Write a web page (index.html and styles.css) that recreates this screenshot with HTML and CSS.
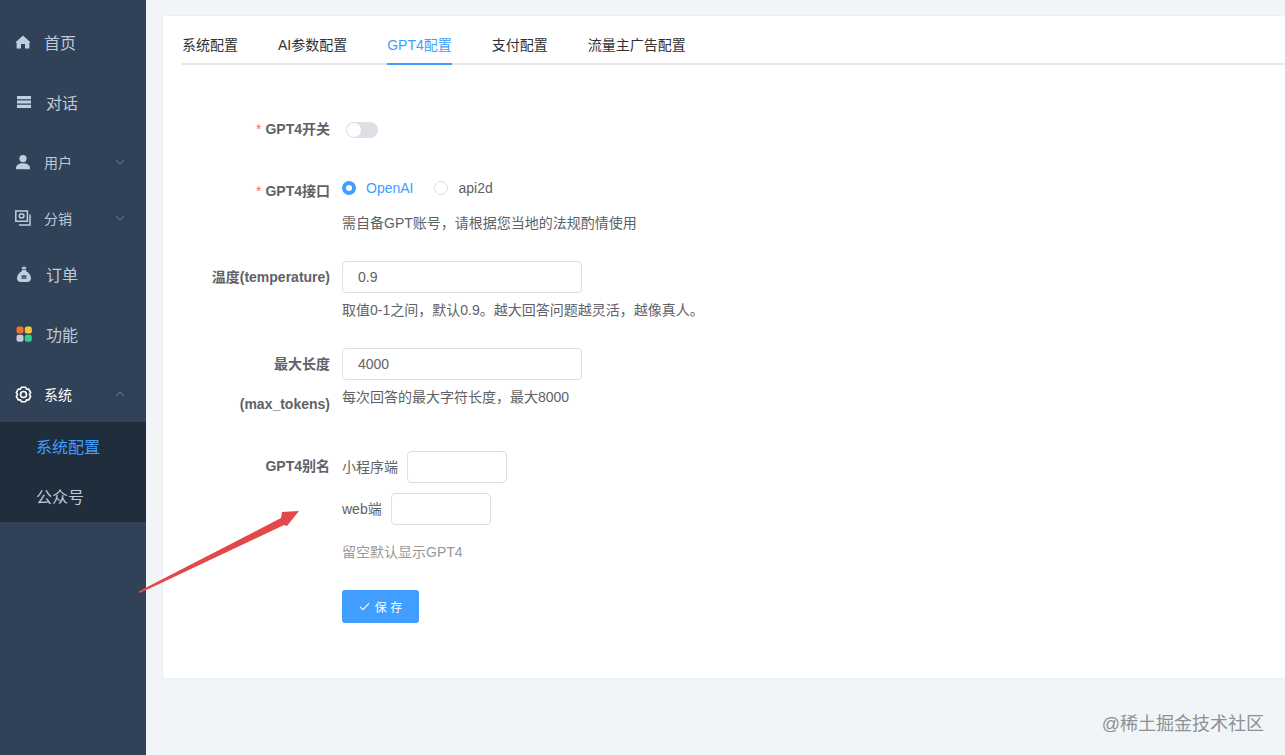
FILE: index.html
```html
<!DOCTYPE html>
<html lang="en">
<head>
    <meta charset="UTF-8">
    <meta name="viewport" content="width=device-width, initial-scale=1.0">
    <title>系统配置</title>
    <link rel="stylesheet" href="styles.css">
</head>
<body>
    <aside class="sidebar">
        <a class="menu-item large">
            <svg class="menu-icon" viewBox="0 0 16 16"><path d="M8 1.5 0.6 8.2 1.6 8.9V14.500H6V10H10V14.500H14.400V8.900L15.400 8.200Z"/></svg>
            <span>首页</span>
        </a>
        <a class="menu-item large shifted">
            <svg class="menu-icon" viewBox="0 0 16 16"><path d="M1 2H15V5.200H1ZM1 6.400H15V9.600H1ZM1 10.800H15V14H1Z"/></svg>
            <span>对话</span>
        </a>
        <a class="menu-item small">
            <svg class="menu-icon" viewBox="0 0 16 16"><circle cx="8" cy="4.600" r="3.600"/><path d="M1 14.400C1 10.800 4 9.200 8 9.200S15 10.800 15 14.400C15 15 14.600 15.300 14 15.300H2C1.400 15.300 1 15 1 14.400Z"/></svg>
            <span>用户</span>
            <svg class="chevron" viewBox="0 0 10 6"><path d="M1 1 5 5 9 1"/></svg>
        </a>
        <a class="menu-item small">
            <svg class="menu-icon outline" viewBox="0 0 16 16"><path d="M0.800 1H12.400V11.200H0.800Z"/><path d="M15 4.500V15H4"/><rect x="4.300" y="3.900" width="4.600" height="3.800" rx="1.800"/></svg>
            <span>分销</span>
            <svg class="chevron" viewBox="0 0 10 6"><path d="M1 1 5 5 9 1"/></svg>
        </a>
        <a class="menu-item large shifted">
            <svg class="menu-icon" viewBox="0 0 16 16">
                <path d="M8 0 9 1.500 10.500 1 10 3H6L5.500 1 7 1.500Z"/>
                <path d="M5.800 3.800H10.200V5.200C12.800 6.800 15 9.200 15 12.200 15 14.600 13.400 16 11 16H5C2.600 16 1 14.600 1 12.200 1 9.200 3.200 6.800 5.800 5.200Z"/>
                <rect class="bag-mark" x="5.500" y="9" width="5" height="4" rx="0.800"/>
            </svg>
            <span>订单</span>
        </a>
        <a class="menu-item large shifted">
            <svg class="menu-icon" viewBox="0 0 16 16">
                <rect x="0.500" y="0.500" width="7" height="7" rx="2" fill="#f0702c"/>
                <rect x="8.800" y="0.500" width="7" height="7" rx="2" fill="#f5c531"/>
                <rect x="0.500" y="8.800" width="7" height="7" rx="2" fill="#c4ccd8"/>
                <rect x="8.800" y="8.800" width="7" height="7" rx="2" fill="#2fcf8a"/>
            </svg>
            <span>功能</span>
        </a>
        <a class="menu-item small open">
            <svg class="menu-icon outline gear" viewBox="0 0 16 16"><path d="M6 1.200H10L10.800 3 12.800 2.800 14.800 6.200 13.600 8 14.800 9.800 12.800 13.200 10.800 13 10 14.800H6L5.200 13 3.200 13.200 1.200 9.800 2.400 8 1.200 6.200 3.200 2.800 5.200 3Z"/><circle cx="8" cy="8" r="2.800"/></svg>
            <span>系统</span>
            <svg class="chevron" viewBox="0 0 10 6"><path d="M1 5 5 1 9 5"/></svg>
        </a>
        <div class="submenu">
            <a class="submenu-item active">系统配置</a>
            <a class="submenu-item">公众号</a>
        </div>
    </aside>

    <main class="main">
        <div class="card">
            <div class="tabs">
                <div class="tab">系统配置</div>
                <div class="tab">AI参数配置</div>
                <div class="tab active">GPT4配置</div>
                <div class="tab">支付配置</div>
                <div class="tab">流量主广告配置</div>
            </div>

            <form class="form">
                <div class="form-item">
                    <label class="form-label required">GPT4开关</label>
                    <div class="form-content">
                        <span class="switch"><span class="switch-knob"></span></span>
                    </div>
                </div>

                <div class="form-item">
                    <label class="form-label low required">GPT4接口</label>
                    <div class="form-content">
                        <div class="radio-group">
                            <span class="radio checked"><span class="radio-dot"></span>OpenAI</span>
                            <span class="radio"><span class="radio-dot"></span>api2d</span>
                        </div>
                        <div class="help">需自备GPT账号，请根据您当地的法规酌情使用</div>
                    </div>
                </div>

                <div class="form-item">
                    <label class="form-label">温度(temperature)</label>
                    <div class="form-content">
                        <div class="input-line"><input class="input" type="text" value="0.9"></div>
                        <div class="help">取值0-1之间，默认0.9。越大回答问题越灵活，越像真人。</div>
                    </div>
                </div>

                <div class="form-item">
                    <label class="form-label">最大长度<br>(max_tokens)</label>
                    <div class="form-content">
                        <div class="input-line"><input class="input" type="text" value="4000"></div>
                        <div class="help">每次回答的最大字符长度，最大8000</div>
                    </div>
                </div>

                <div class="form-item alias">
                    <label class="form-label">GPT4别名</label>
                    <div class="form-content">
                        <div class="alias-row"><span>小程序端</span><input class="input short" type="text"></div>
                        <div class="alias-row"><span>web端</span><input class="input short" type="text"></div>
                        <div class="help muted">留空默认显示GPT4</div>
                        <button type="button" class="save-btn">
                            <svg class="check" viewBox="0 0 12 10"><path d="M1 5.500 4.300 8.500 11 1.500"/></svg>
                            保 存
                        </button>
                    </div>
                </div>
            </form>
        </div>
    </main>

    <svg class="arrow" viewBox="0 0 180 100"><polygon points="8.500,91.500 151,18 152,12 169,11 157,26 154,25 10,93"/></svg>
    <div class="watermark">@稀土掘金技术社区</div>
</body>
</html>
```

FILE: styles.css
```css
* {
    box-sizing: border-box;
}
html, body {
    height: 100%;
}
body {
    margin: 0;
    display: flex;
    overflow: hidden;
    background-color: #f1f5f8;
    color: #606266;
    font-family: "Liberation Sans", "Noto Sans CJK SC", sans-serif;
    font-size: 14px;
}

/* sidebar */
.sidebar {
    width: 146px;
    flex-shrink: 0;
    padding-top: 12px;
    background-color: #304158;
}
.menu-item {
    display: flex;
    align-items: center;
    padding-left: 15px;
    color: #bfcbd9;
}
.menu-item.large {
    height: 60px;
    font-size: 16px;
}
.menu-item.small {
    height: 56px;
    padding-top: 4px;
    font-size: 14px;
}
.menu-item.small.open {
    margin-top: 2px;
    padding-top: 0;
    color: #fff;
}
.menu-item span {
    margin-left: 13px;
}
.menu-item.shifted span {
    margin-left: 14px;
}
.menu-item.shifted .menu-icon {
    margin-left: 1px;
}
.menu-icon {
    width: 16px;
    height: 16px;
    fill: #bfcfe2;
    flex-shrink: 0;
}
.menu-icon.outline {
    fill: none;
    stroke: #bfcfe2;
    stroke-width: 1.500;
}
.menu-icon.gear {
    width: 17px;
    height: 17px;
    margin-right: -1px;
    stroke: #fff;
    stroke-width: 1.500;
    stroke-linejoin: round;
}
.bag-mark {
    fill: #55657c;
}
.chevron {
    width: 10px;
    height: 6px;
    margin-left: auto;
    margin-right: 21px;
    fill: none;
    stroke: #6f7f94;
    stroke-width: 1;
}
.submenu {
    background-color: #1f2d3d;
}
.submenu-item {
    display: flex;
    align-items: center;
    height: 50px;
    padding-left: 36px;
    padding-bottom: 2px;
    color: #bfcbd9;
    font-size: 16px;
}
.submenu-item.active {
    color: #409eff;
}

/* main card */
.main {
    flex: 1;
    min-width: 0;
    padding: 15px 0 0 16px;
}
.card {
    height: 664px;
    padding: 19px 0 0 19px;
    background-color: #fff;
    border: 1px solid #ebeef5;
    border-right: none;
    border-radius: 4px 0 0 4px;
}
.tabs {
    display: flex;
    gap: 40px;
    height: 30px;
    border-bottom: 2px solid #e4e7ed;
}
.tab {
    height: 30px;
    line-height: 20px;
    color: #303133;
}
.tab.active {
    color: #409eff;
    border-bottom: 2px solid #409eff;
}

/* form */
.form {
    margin-top: 44px;
}
.form-item {
    display: grid;
    grid-template-columns: 148px 1fr;
    column-gap: 12px;
    margin-bottom: 21px;
}
.form-item.alias {
    margin-top: 22px;
}
.form-label {
    line-height: 40px;
    text-align: right;
    font-weight: bold;
}
.form-label.low {
    padding-top: 1px;
}
.form-label.required::before {
    content: "*";
    margin-right: 4px;
    color: #f56c6c;
    font-weight: normal;
}
.form-content {
    line-height: 40px;
}
.switch {
    display: block;
    position: relative;
    width: 32px;
    height: 16px;
    margin: 13px 0 0 4px;
    background-color: #dcdfe6;
    border-radius: 8px;
}
.switch-knob {
    position: absolute;
    top: 1px;
    left: 1px;
    width: 14px;
    height: 14px;
    background-color: #fff;
    border-radius: 50%;
}
.radio-group {
    display: flex;
    gap: 21px;
    height: 36px;
    line-height: 36px;
}
.radio {
    display: flex;
    align-items: center;
    gap: 10px;
}
.radio.checked {
    color: #409eff;
}
.radio-dot {
    width: 14px;
    height: 14px;
    background-color: #fff;
    border: 1px solid #dcdfe6;
    border-radius: 50%;
}
.radio.checked .radio-dot {
    border: 4.500px solid #409eff;
}
.help {
    margin-top: 4px;
    line-height: 26px;
}
.form-item .input-line + .help {
    margin-top: 0;
}
.help.muted {
    margin-top: 14px;
    color: #999;
}
.input-line {
    height: 40px;
    padding-top: 4px;
}
.input {
    display: block;
    width: 240px;
    height: 32px;
    padding: 0 15px;
    color: #606266;
    background-color: #fff;
    border: 1px solid #dcdfe6;
    border-radius: 4px;
    font-family: inherit;
    font-size: 14px;
    outline: none;
}
.input.short {
    width: 100px;
}
.alias-row {
    display: flex;
    align-items: center;
    gap: 9px;
    height: 32px;
    line-height: 32px;
    margin-top: 5px;
    margin-bottom: 10px;
}
.alias-row + .alias-row {
    margin-bottom: 0;
}
.save-btn {
    display: flex;
    align-items: center;
    justify-content: center;
    gap: 5px;
    width: 77px;
    height: 33px;
    margin-top: 25px;
    padding: 0;
    color: #fff;
    background-color: #409eff;
    border: none;
    border-radius: 3px;
    font-family: inherit;
    font-size: 12px;
}
.check {
    width: 11px;
    height: 9px;
    fill: none;
    stroke: #fff;
    stroke-width: 1.200;
}

/* things lying on top of the page */
.arrow {
    position: absolute;
    left: 130px;
    top: 500px;
    width: 180px;
    height: 100px;
    fill: #e2474a;
}
.watermark {
    position: absolute;
    right: 21px;
    top: 712px;
    color: #8d9095;
    font-size: 18px;
    line-height: 24px;
}
```
